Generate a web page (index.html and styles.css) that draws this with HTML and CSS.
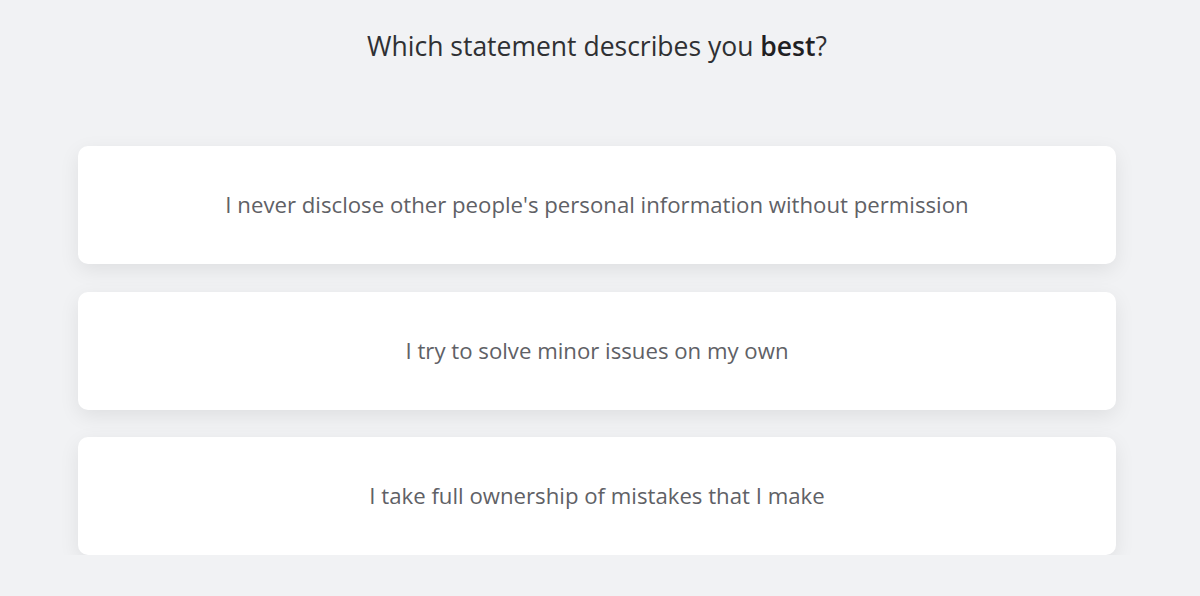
FILE: index.html
```html
<!DOCTYPE html>
<html lang="en">
<head>
<meta charset="utf-8">
<title>Which statement describes you best?</title>
<link rel="stylesheet" href="styles.css">
</head>
<body>
<main class="quiz">
  <h1 class="question">Which statement describes you <strong>best</strong>?</h1>
  <div class="options">
    <button class="option">I never disclose other people's personal information without permission</button>
    <button class="option">I try to solve minor issues on my own</button>
    <button class="option">I take full ownership of mistakes that I make</button>
  </div>
</main>
</body>
</html>
```

FILE: styles.css
```css
html, body {
  margin: 0;
  padding: 0;
  background: #f1f2f4;
  font-family: "Open Sans", "Noto Sans", sans-serif;
}
.quiz {
  display: flex;
  flex-direction: column;
  align-items: center;
  padding: 27px 84px 0 78px;
}
.question {
  margin: 0;
  font-size: 26.5px;
  font-weight: 400;
  color: #2f3033;
  line-height: 38px;
}
.question strong {
  font-weight: 600;
  color: #1f2023;
}
.options {
  margin-top: 81px;
  width: 100%;
  display: flex;
  flex-direction: column;
  gap: 27.5px;
}
.option {
  display: flex;
  align-items: center;
  justify-content: center;
  height: 118px;
  background: #fff;
  border: none;
  border-radius: 10px;
  box-shadow: 0 6px 20px rgba(0, 0, 0, 0.08);
  font-family: inherit;
  font-size: 22.2px;
  color: #5f6166;
  padding: 0 0 1px;
}
```
